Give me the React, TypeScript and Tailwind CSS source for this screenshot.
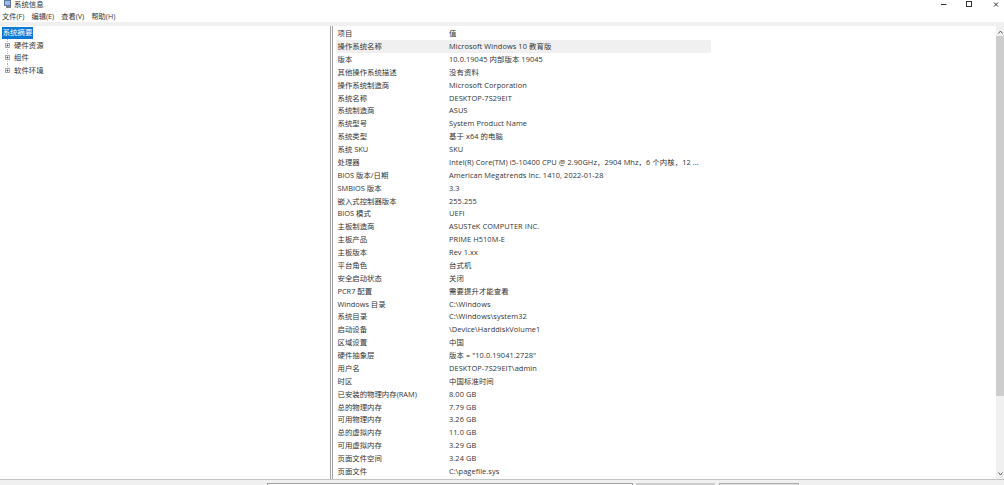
const rows: [string, string][] = [
  ["操作系统名称", "Microsoft Windows 10 教育版"],
  ["版本", "10.0.19045 内部版本 19045"],
  ["其他操作系统描述", "没有资料"],
  ["操作系统制造商", "Microsoft Corporation"],
  ["系统名称", "DESKTOP-7S29EIT"],
  ["系统制造商", "ASUS"],
  ["系统型号", "System Product Name"],
  ["系统类型", "基于 x64 的电脑"],
  ["系统 SKU", "SKU"],
  ["处理器", "Intel(R) Core(TM) i5-10400 CPU @ 2.90GHz，2904 Mhz，6 个内核，12 ..."],
  ["BIOS 版本/日期", "American Megatrends Inc. 1410, 2022-01-28"],
  ["SMBIOS 版本", "3.3"],
  ["嵌入式控制器版本", "255.255"],
  ["BIOS 模式", "UEFI"],
  ["主板制造商", "ASUSTeK COMPUTER INC."],
  ["主板产品", "PRIME H510M-E"],
  ["主板版本", "Rev 1.xx"],
  ["平台角色", "台式机"],
  ["安全启动状态", "关闭"],
  ["PCR7 配置", "需要提升才能查看"],
  ["Windows 目录", "C:\\Windows"],
  ["系统目录", "C:\\Windows\\system32"],
  ["启动设备", "\\Device\\HarddiskVolume1"],
  ["区域设置", "中国"],
  ["硬件抽象层", "版本 = \"10.0.19041.2728\""],
  ["用户名", "DESKTOP-7S29EIT\\admin"],
  ["时区", "中国标准时间"],
  ["已安装的物理内存(RAM)", "8.00 GB"],
  ["总的物理内存", "7.79 GB"],
  ["可用物理内存", "3.26 GB"],
  ["总的虚拟内存", "11.0 GB"],
  ["可用虚拟内存", "3.29 GB"],
  ["页面文件空间", "3.24 GB"],
  ["页面文件", "C:\\pagefile.sys"],
];

function Expander({ last }: { last?: boolean }) {
  return (
    <svg width="7" height="13" viewBox="0 0 7 13" className="shrink-0">
      <path d={last ? "M3.5 0V4" : "M3.5 0V13"} stroke="#b5b5b5" strokeDasharray="1 1" />
      <rect x="1.5" y="4.5" width="4" height="4" fill="#fff" stroke="#a8a8a8" />
      <path d="M2.5 6.5H4.5M3.5 5.5V7.5" stroke="#555" />
    </svg>
  );
}

function TreeItem({ label, last }: { label: string; last?: boolean }) {
  return (
    <div className="flex h-[12.5px] items-center pl-[4px]">
      <Expander last={last} />
      <span className="ml-[3px]">{label}</span>
    </div>
  );
}

export default function App() {
  return (
    <div
      className="flex h-[485px] w-[1004px] flex-col overflow-hidden bg-white text-[7.4px] leading-none text-[#333]"
      style={{ fontFamily: '"Open Sans", "Noto Sans CJK SC", sans-serif' }}
    >
      <header className="flex h-[9px] shrink-0 items-center pl-[3px]">
        <svg width="9" height="9" viewBox="0 0 9 9" className="shrink-0">
          <rect x="1" y="0" width="7" height="6" fill="#5b7aa8" />
          <rect x="2" y="1" width="5" height="4" fill="#9dbbe0" />
          <rect x="3" y="6" width="5" height="2" fill="#7a7f8c" />
        </svg>
        <span className="ml-[2px]">系统信息</span>
        <svg width="64" height="8" viewBox="0 0 64 8" className="ml-auto shrink-0">
          <path d="M1 3.5H6.5" stroke="#333" />
          <rect x="26.5" y="0.5" width="5" height="5" fill="none" stroke="#333" />
          <path d="M54 1.5L58 5.5M58 1.5L54 5.5" stroke="#333" />
        </svg>
      </header>
      <nav className="flex h-[13px] shrink-0 items-center gap-[7.2px] pl-[2px] pt-[2px] text-[7.2px]">
        <span>文件(F)</span>
        <span>编辑(E)</span>
        <span>查看(V)</span>
        <span>帮助(H)</span>
      </nav>
      <div className="h-[4px] shrink-0 bg-[#f0f0f0]" />
      <main className="flex min-h-0 flex-1 border-b border-[#c4c4c4]">
        <aside className="w-[330px] shrink-0 pt-[1px]">
          <div className="ml-[2px] flex h-[12px] w-[31px] items-center justify-center whitespace-nowrap bg-[#0a78d7] text-white">
            系统摘要
          </div>
          <TreeItem label="硬件资源" />
          <TreeItem label="组件" />
          <TreeItem label="软件环境" last />
        </aside>
        <div className="w-[3px] shrink-0 border-x border-[#a0a0a0] bg-white" />
        <section className="min-w-0 flex-1 overflow-hidden pl-[3px] pt-[1.5px]">
          <div className="flex h-[12.88px] w-[375px] items-center">
            <span className="w-[113px] pl-[1.5px]">项目</span>
            <span>值</span>
          </div>
          {rows.map(([key, value], i) => (
            <div
              key={key}
              className={`flex h-[12.88px] w-[375px] items-center whitespace-nowrap ${i === 0 ? "bg-[#f0f0f0]" : ""}`}
            >
              <span className="w-[113px] pl-[1.5px]">{key}</span>
              <span className="tracking-[0.08px]">{value}</span>
            </div>
          ))}
        </section>
        <div className="flex w-[8px] shrink-0 flex-col items-center bg-[#f0f0f0]">
          <svg width="5" height="4" viewBox="0 0 5 4" className="mb-[2px] mt-[4px] shrink-0">
            <path d="M0.5 3.5L2.5 1L4.5 3.5" fill="none" stroke="#606060" />
          </svg>
          <div className="h-[360px] w-full bg-[#cdcdcd]" />
          <svg width="5" height="4" viewBox="0 0 5 4" className="mb-[3px] mt-auto shrink-0">
            <path d="M0.5 0.5L2.5 3L4.5 0.5" fill="none" stroke="#606060" />
          </svg>
        </div>
      </main>
      <footer className="flex h-[5px] shrink-0 items-start bg-[#f0f0f0] pl-[267px] pt-[3px]">
        <div className="h-[4px] w-[366px] border border-[#a0a0a0] bg-white" />
        <div className="ml-[3px] h-[4px] w-[79px] bg-[#cccccc]" />
        <div className="ml-[4px] h-[4px] w-[80px] border border-[#adadad] bg-[#e1e1e1]" />
      </footer>
    </div>
  );
}
